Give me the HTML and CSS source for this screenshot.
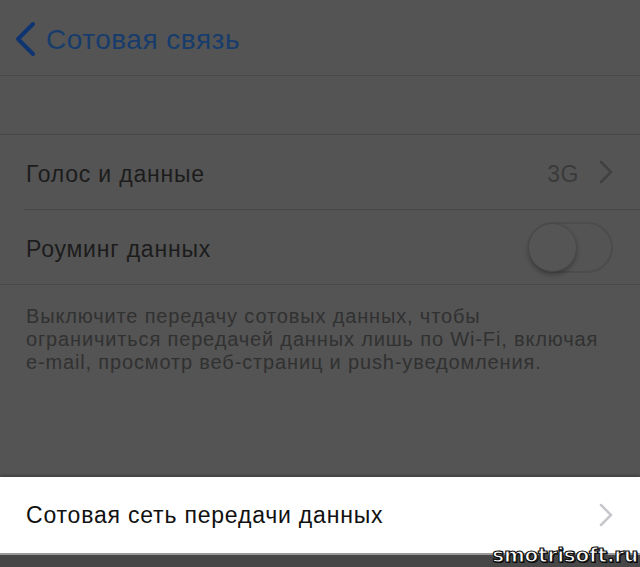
FILE: index.html
```html
<!DOCTYPE html>
<html lang="ru">
<head>
    <meta charset="UTF-8">
    <title>Сотовая связь</title>
    <link rel="stylesheet" href="styles.css">
</head>
<body>
    <div class="screen">
        <div class="navbar">
            <svg class="back-icon" width="24" height="36" viewBox="0 0 24 36">
                <path d="M20 3 L5 18 L20 33" fill="none" stroke="#0e3472" stroke-width="4" stroke-linecap="round" stroke-linejoin="round"/>
            </svg>
            <span class="nav-title">Сотовая связь</span>
        </div>

        <div class="spacer top"></div>

        <div class="group">
            <div class="row">
                <span class="label">Голос и данные</span>
                <span class="value">3G</span>
                <svg class="chevron" width="14" height="24" viewBox="0 0 14 24">
                    <path d="M2 2 L12 12 L2 22" fill="none" stroke="#414141" stroke-width="2.5" stroke-linecap="round"/>
                </svg>
            </div>
            <div class="row">
                <span class="label">Роуминг данных</span>
                <div class="toggle"><div class="knob"></div></div>
            </div>
        </div>

        <p class="footnote">Выключите передачу сотовых данных, чтобы<br>ограничиться передачей данных лишь по Wi-Fi, включая<br>e-mail, просмотр веб-страниц и push-уведомления.</p>

        <div class="highlight">
            <span class="label">Сотовая сеть передачи данных</span>
            <svg class="chevron" width="14" height="24" viewBox="0 0 14 24">
                <path d="M2 2 L12 12 L2 22" fill="none" stroke="#c7c7cc" stroke-width="2.5" stroke-linecap="round"/>
            </svg>
        </div>

        <div class="bottom-bar"></div>

        <div class="watermark">smotrisoft.ru</div>
    </div>
</body>
</html>
```

FILE: styles.css
```css
:root {
    --overlay: #545454;
    --line: #494949;
    --text-dark: #1c1c1c;
}

body {
    margin: 0;
    background: var(--overlay);
    font-family: "Liberation Sans", Arial, sans-serif;
}

.screen {
    position: relative;
    width: 640px;
    height: 567px;
    overflow: hidden;
    display: flex;
    flex-direction: column;
}

.navbar {
    height: 76px;
    display: flex;
    align-items: center;
    padding-left: 13px;
    border-bottom: 1px solid var(--line);
    box-sizing: border-box;
}

.back-icon {
    margin-top: 2px;
}

.nav-title {
    margin-left: 9px;
    margin-top: 4px;
    font-size: 28px;
    letter-spacing: 0.5px;
    color: #173c6c;
}

.spacer.top {
    height: 58px;
    border-bottom: 1px solid var(--line);
}

.group {
    border-bottom: 1px solid var(--line);
}

.row {
    height: 74px;
    display: flex;
    align-items: center;
    margin-left: 24px;
    padding: 0 27px 0 2px;
}

.row + .row {
    border-top: 1px solid var(--line);
}

.label {
    flex: 1;
    font-size: 23px;
    letter-spacing: 0.8px;
    color: var(--text-dark);
}

.row .label {
    padding-top: 4px;
}

.value {
    font-size: 23px;
    letter-spacing: 0.5px;
    color: #3a3a3a;
    margin-right: 20px;
    padding-top: 4px;
}

.toggle {
    width: 85px;
    height: 51px;
    border: 2px solid #4c4c4c;
    border-radius: 26px;
    box-sizing: border-box;
    position: relative;
}

.knob {
    position: absolute;
    left: -2px;
    top: -1px;
    width: 49px;
    height: 49px;
    border-radius: 50%;
    background: #555;
    border: 1px solid #484848;
    box-sizing: border-box;
    box-shadow: 0 3px 4px rgba(0,0,0,0.25);
}

.footnote {
    margin: 20px 26px 0 26px;
    font-size: 20px;
    line-height: 23px;
    letter-spacing: 0.85px;
    color: #313131;
    white-space: nowrap;
    height: 172px;
}

.highlight {
    height: 76px;
    background: #ffffff;
    display: flex;
    align-items: center;
    padding: 0 27px 0 26px;
    box-shadow: 0 -2px 2px rgba(0,0,0,0.2);
}

.highlight .label {
    color: #111;
}

.bottom-bar {
    flex: 1;
    background: #474747;
    border-top: 2px solid #9a9a9a;
}

.watermark {
    position: absolute;
    right: 2px;
    bottom: 1px;
    font-family: "DejaVu Sans", sans-serif;
    font-weight: bold;
    font-size: 20px;
    line-height: 22px;
    color: #ffffff;
    letter-spacing: -0.2px;
    -webkit-text-stroke: 1.2px #111;
    text-shadow: 1px 1px 0 #000;
}
```
